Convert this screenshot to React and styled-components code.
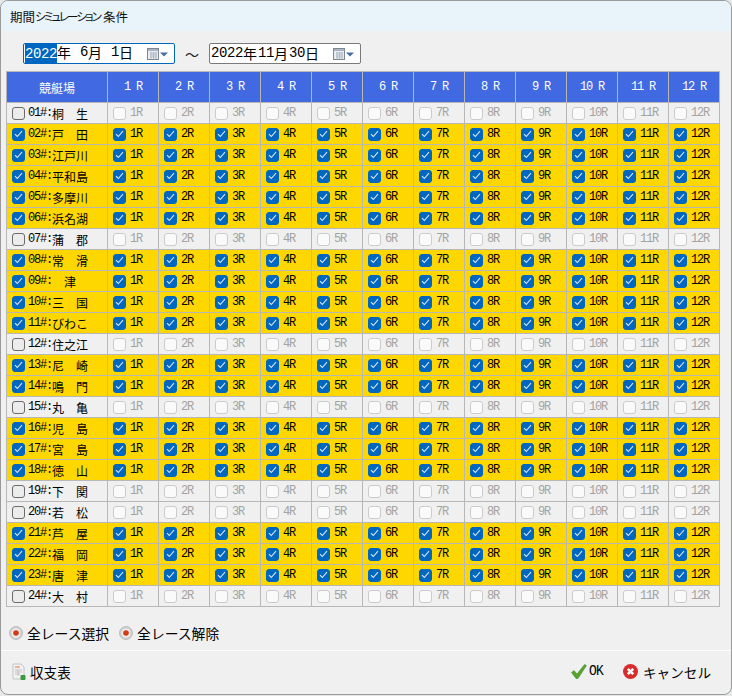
import React from "react";
import styled, { createGlobalStyle } from "styled-components";

const Global = createGlobalStyle`
  html, body { margin: 0; padding: 0; background: #e6e8ea; overflow: hidden; }
  * { box-sizing: border-box; }
`;
const CJK = `"Noto Sans CJK JP", "Liberation Sans", sans-serif`;

const Win = styled.div`
  width: 732px; height: 695px; background: #f0f0f0; border: 1px solid #9a9a9a;
  border-radius: 8px; overflow: hidden; display: flex; flex-direction: column;
  font-family: ${CJK}; color: #000;
`;
const TitleBar = styled.div`
  height: 30px; background: #e9f3fa; padding: 0 0 0 9px; display: flex; align-items: center;
  font-size: 12.5px; color: #111; white-space: pre;
`;
const Kana = styled.span`font-feature-settings: "palt"; font-size: 11.5px; letter-spacing: -1.9px; margin-right: 3px;`;
const DateRow = styled.div`
  display: flex; align-items: center; padding: 12px 0 0 22px; height: 33px;
`;
const DateBox = styled.div`
  width: 152px; height: 21px; background: #fff; border: 1px solid ${p => p.$active ? "#0067c0" : "#7a7a7a"};
  border-radius: 2px; display: flex; align-items: center; padding: 0 2px 0 1px; font-size: 14px; line-height: 17px;
`;
const Sel = styled.span`background: #0067c0; color: #fff;`;
const DateText = styled.span`flex: 1; white-space: pre; display: flex;`;
const Digit = styled.span`
  font-family: "Liberation Mono", monospace; font-size: 14px; letter-spacing: -.4px;
`;
const Unit = styled.span`margin-right: 1px;`;
const Tilde = styled.span`width: 34px; text-align: center; font-size: 14px; color: #222;`;
const Grid = styled.div`
  margin: 7px 0 0 5px; width: 714px; display: grid; gap: 1px; padding: 1px;
  grid-template-columns: 100px repeat(12, 50px);
  grid-template-rows: 30px repeat(24, 20px);
  background: #b7b7b7;
`;
const Head = styled.div`
  background: #4169e1; color: #fff; display: flex; align-items: center; justify-content: center;
  font-size: 12px; white-space: pre;
`;
const Mono = styled.span`font-family: "Liberation Mono", monospace; font-size: 12px; letter-spacing: -1.2px;`;
const NameCell = styled.div`
  background: ${p => p.$on ? "#ffd700" : "#f0f0f0"}; display: flex; align-items: center; padding-left: 5px;
  font-size: 12px; white-space: pre; gap: 3px;
`;
const RaceCell = styled.div`
  background: ${p => p.$on ? "#ffd700" : "#f0f0f0"}; color: ${p => p.$on ? "#000" : "#a3a3a3"};
  display: flex; align-items: center; padding-left: 5px; gap: 4px;
`;
const CheckBox = styled.span`
  width: 13px; height: 13px; border-radius: 3px; flex: none; display: flex; align-items: center; justify-content: center;
  background: ${p => p.$on ? "#0067c0" : p.$strong ? "#ececec" : "#fafafa"};
  border: 1px solid ${p => p.$on ? "#0067c0" : p.$strong ? "#6b6b6b" : "#cbcbcb"};
`;
const Name = styled.span`display: inline-flex; align-items: center; font-size: 12px;`;
const Options = styled.div`
  display: flex; align-items: center; padding: 7px 0 0 8px; height: 44px; gap: 10px;
`;
const Option = styled.div`display: flex; align-items: center; gap: 4px; font-size: 13.8px; line-height: 16px;`;
const Divider = styled.div`height: 1px; background: #fff; margin-top: -1px;`;
const Footer = styled.div`
  flex: 1; display: flex; align-items: center; padding: 0 20px 2px 11px; font-size: 13.6px;
`;
const Spacer = styled.div`flex: 1;`;
const FootBtn = styled.div`display: flex; align-items: center; gap: ${p => p.$gap}px; margin-left: ${p => p.$ml || 0}px;`;
const OKText = styled.span`font-family: "Liberation Mono", monospace; font-size: 13px; letter-spacing: -.8px; transform: scaleY(1.1);`;

const Tick = () => (
  <svg width="9" height="8" viewBox="0 0 9 8"><path d="M1 4.2 3.3 6.5 8 1.2" fill="none" stroke="#dbe9f7" strokeWidth="1.1" /></svg>
);
const CalIcon = () => (
  <svg width="25" height="14" viewBox="0 0 25 14">
    <rect x="0.5" y="1.5" width="11" height="11" fill="#e9edf2" stroke="#7d8894" />
    <rect x="1" y="2" width="10" height="2" fill="#a9b4c0" />
    <path d="M3 6h7M3 8h7M3 10h7M4 5v7M6.5 5v7M9 5v7" stroke="#a2acb7" strokeWidth=".7" />
    <path d="M13 5.5h8l-4 4z" fill="#4a6fa5" />
  </svg>
);
const Radio = () => (
  <svg width="14" height="14" viewBox="0 0 14 14">
    <circle cx="7" cy="7" r="6.5" fill="#cfcfcf" stroke="#bdbdbd" />
    <circle cx="7" cy="7" r="4.5" fill="#eeeeee" />
    <circle cx="7" cy="7" r="2.8" fill="#d33a12" />
  </svg>
);
const Report = () => (
  <svg width="14" height="18" viewBox="0 0 14 18">
    <path d="M1 1h8l3 3v12H1z" fill="#f2f2f2" stroke="#c4c4c4" />
    <path d="M3 4h5" stroke="#e8a07a" strokeWidth="1.4" />
    <path d="M3 7h7M3 9h7M3 11h5M6 6v7" stroke="#c4c4c4" />
    <rect x="8.5" y="12" width="5" height="5" rx="1" fill="#3d9a3d" />
  </svg>
);
const OkIcon = () => (
  <svg width="16" height="15" viewBox="0 0 16 15">
    <path d="M0.5 8.5 3 6.5 6 10 13.5 0.5 15.5 1.5 7 14.5 5 14.5z" fill="#57a32b" stroke="#3f8a20" strokeWidth=".5" />
  </svg>
);
const CancelIcon = () => (
  <svg width="15" height="15" viewBox="0 0 15 15">
    <circle cx="7.5" cy="7.5" r="7.5" fill="#d92b2b" />
    <path d="M4.8 4.8 10.2 10.2M10.2 4.8 4.8 10.2" stroke="#fff" strokeWidth="2.6" />
  </svg>
);

const venues = [
  ["01", "桐　生", 0], ["02", "戸　田", 1], ["03", "江戸川", 1], ["04", "平和島", 1], ["05", "多摩川", 1], ["06", "浜名湖", 1],
  ["07", "蒲　郡", 0], ["08", "常　滑", 1], ["09", "　津", 1], ["10", "三　国", 1], ["11", "びわこ", 1], ["12", "住之江", 0],
  ["13", "尼　崎", 1], ["14", "鳴　門", 1], ["15", "丸　亀", 0], ["16", "児　島", 1], ["17", "宮　島", 1], ["18", "徳　山", 1],
  ["19", "下　関", 0], ["20", "若　松", 0], ["21", "芦　屋", 1], ["22", "福　岡", 1], ["23", "唐　津", 1], ["24", "大　村", 0],
];
const races = Array.from({ length: 12 }, (_, i) => i + 1);

export default function App() {
  return (
    <>
      <Global />
      <Win>
        <TitleBar>期間<Kana>シミュレーション</Kana>条件</TitleBar>
        <DateRow>
          <DateBox $active>
            <DateText><Sel><Digit>2022</Digit></Sel><Unit>年</Unit><Digit> 6</Digit><Unit>月</Unit><Digit> 1</Digit>日</DateText>
            <CalIcon />
          </DateBox>
          <Tilde>～</Tilde>
          <DateBox>
            <DateText><Digit>2022</Digit><Unit>年</Unit><Digit>11</Digit><Unit>月</Unit><Digit>30</Digit>日</DateText>
            <CalIcon />
          </DateBox>
        </DateRow>
        <Grid>
          <Head>競艇場</Head>
          {races.map(r => <Head key={r}><Mono>{r} R</Mono></Head>)}
          {venues.map(([n, name, on]) => (
            <React.Fragment key={n}>
              <NameCell $on={on}>
                <CheckBox $on={on} $strong>{on ? <Tick /> : null}</CheckBox>
                <Name><Mono>{n}#:</Mono>{name}</Name>
              </NameCell>
              {races.map(r => (
                <RaceCell key={r} $on={on}>
                  <CheckBox $on={on}>{on ? <Tick /> : null}</CheckBox>
                  <Mono>{r}R</Mono>
                </RaceCell>
              ))}
            </React.Fragment>
          ))}
        </Grid>
        <Options>
          <Option><Radio />全レース選択</Option>
          <Option><Radio />全レース解除</Option>
        </Options>
        <Divider />
        <Footer>
          <FootBtn $gap={4}><Report />収支表</FootBtn>
          <Spacer />
          <FootBtn $gap={2}><OkIcon /><OKText>OK</OKText></FootBtn>
          <FootBtn $gap={5} $ml={20}><CancelIcon />キャンセル</FootBtn>
        </Footer>
      </Win>
    </>
  );
}
